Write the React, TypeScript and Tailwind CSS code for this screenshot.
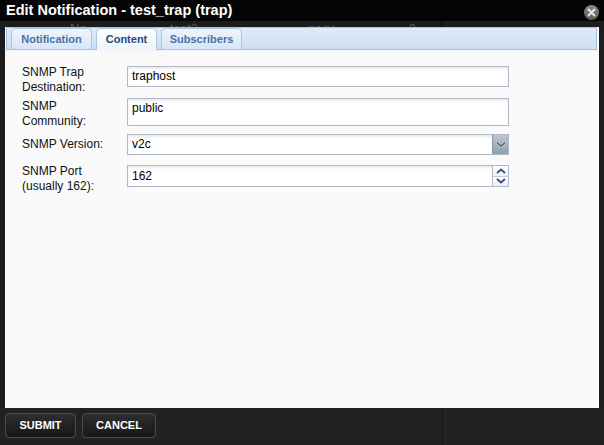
import React from "react";

const font = { fontFamily: '"Liberation Sans", Arial, Helvetica, sans-serif' };

function Row({ label, children, labelClass = "", className = "" }: { label: React.ReactNode; children: React.ReactNode; labelClass?: string; className?: string }) {
  return (
    <div className={`flex items-start ${className}`}>
      <div className={`w-[105px] shrink-0 text-[12px] leading-[15px] text-[#111] ${labelClass}`}>{label}</div>
      {children}
    </div>
  );
}

export default function App() {
  return (
    <div className="w-[604px] h-[445px] bg-[#222] flex flex-col overflow-hidden relative" style={font}>
      {/* title bar */}
      <div className="h-[21px] bg-[#050505] flex items-center pl-[6px] relative">
        <span className="text-white font-bold text-[14.5px] leading-none">Edit Notification - test_trap (trap)</span>
        <div className="absolute left-[584px] top-[5px] w-[15px] h-[15px] rounded-full bg-gradient-to-b from-[#8a8a8a] to-[#5a5a5a] flex items-center justify-center">
          <svg width="9" height="9" viewBox="0 0 9 9">
            <path d="M1.5 1.5 L7.5 7.5 M7.5 1.5 L1.5 7.5" stroke="#e8e8e8" strokeWidth="2" strokeLinecap="round" />
          </svg>
        </div>
      </div>
      {/* background strip: page behind the dialog */}
      <div className="h-[6px] bg-[#1c1c1c] relative overflow-hidden flex items-start text-[13px] leading-[13px] text-[#555]">
        <span className="ml-[70px] mt-[1px]">No</span>
        <span className="ml-[83px] mt-[1px]">test2</span>
        <span className="ml-[110px] mt-[1px]">page</span>
        <span className="ml-[72px] mt-[1px]">0</span>
        <div className="absolute left-[441px] top-0 w-[2px] h-full bg-[#111]" />
      </div>
      {/* main */}
      <div className="flex h-[381px]">
        <div className="w-[5px] bg-[#1c1c1c]" />
        <div className="w-[594px] bg-[#fafafa] flex flex-col">
          {/* tab bar */}
          <div className="ml-[1px] mr-[2px] h-[23px] border border-[#a3c4e8] bg-gradient-to-b from-[#e0eaf6] to-[#cddff1] flex items-end pl-[4px] gap-[4px]">
            <div className="h-[21px] w-[81px] rounded-t-[5px] border border-b-0 border-[#a8c7e6] bg-gradient-to-b from-[#eef4fb] to-[#d8e6f5] flex items-center justify-center text-[11px] font-bold text-[#4a72a6]">Notification</div>
            <div className="h-[22px] -mb-[1px] w-[61px] rounded-t-[5px] border border-b-0 border-[#a8c7e6] bg-gradient-to-b from-[#ffffff] to-[#eef4fb] flex items-center justify-center text-[11px] font-bold text-[#1f4a82]">Content</div>
            <div className="h-[21px] w-[81px] rounded-t-[5px] border border-b-0 border-[#a8c7e6] bg-gradient-to-b from-[#eef4fb] to-[#d8e6f5] flex items-center justify-center text-[11px] font-bold text-[#4a72a6]">Subscribers</div>
          </div>
          <div className="h-[2px] bg-[#f3f6fa]" />
          {/* form */}
          <div className="pl-[17px] pt-[14px] flex flex-col">
            <Row label={<>SNMP Trap<br />Destination:</>} className="h-[32px]" labelClass="-mt-[1px]">
              <div className="w-[382px] h-[21px] border border-[#b3b7c8] bg-white shadow-[inset_0_2px_2px_rgba(0,0,0,0.08)] text-[12px] leading-[19px] pl-[4px] text-black">traphost</div>
            </Row>
            <Row label={<>SNMP<br />Community:</>} className="h-[36px]" labelClass="mt-[1px]">
              <div className="w-[382px] h-[28px] border border-[#b3b7c8] bg-white shadow-[inset_0_2px_2px_rgba(0,0,0,0.08)] text-[12px] leading-[15px] pl-[4px] pt-[2px] text-black">public</div>
            </Row>
            <Row label="SNMP Version:" className="h-[31px]" labelClass="mt-[3px]">
              <div className="w-[382px] h-[21px] border border-[#b3b7c8] bg-white shadow-[inset_0_2px_2px_rgba(0,0,0,0.08)] flex">
                <div className="flex-1 text-[12px] leading-[19px] pl-[4px] text-black">v2c</div>
                <div className="w-[16px] h-full border-l border-[#8797a6] bg-gradient-to-b from-[#bac7d2] to-[#8ea1b2] flex items-center justify-center">
                  <svg width="10" height="7" viewBox="0 0 10 7">
                    <path d="M1 1.5 L5 5 L9 1.5" stroke="#e6ecf1" strokeWidth="2.4" fill="none" />
                    <path d="M1 1.5 L5 5 L9 1.5" stroke="#505860" strokeWidth="1.6" fill="none" />
                  </svg>
                </div>
              </div>
            </Row>
            <Row label={<>SNMP Port<br />(usually 162):</>} labelClass="-mt-[1px]">
              <div className="w-[382px] h-[22px] border border-[#b3b7c8] bg-white shadow-[inset_0_2px_2px_rgba(0,0,0,0.08)] flex">
                <div className="flex-1 text-[12px] leading-[20px] pl-[4px] text-black">162</div>
                <div className="w-[16px] h-full border-l border-[#b3b7c8] flex flex-col">
                  <div className="flex-1 border-b border-[#c6c9d4] bg-gradient-to-b from-[#ffffff] to-[#eef0f4] flex items-center justify-center">
                    <svg width="10" height="6" viewBox="0 0 10 6">
                      <path d="M1 5 L5 1.5 L9 5" stroke="#2c4f8e" strokeWidth="1.8" fill="none" />
                    </svg>
                  </div>
                  <div className="flex-1 bg-gradient-to-b from-[#ffffff] to-[#eef0f4] flex items-center justify-center">
                    <svg width="10" height="6" viewBox="0 0 10 6">
                      <path d="M1 1 L5 4.5 L9 1" stroke="#2c4f8e" strokeWidth="1.8" fill="none" />
                    </svg>
                  </div>
                </div>
              </div>
            </Row>
          </div>
        </div>
        <div className="w-[5px] bg-[#1e1e1e]" />
      </div>
      {/* bottom bar */}
      <div className="flex-1 bg-[#222] relative flex items-start pt-[5px] pl-[5px] gap-[6px]">
        <div className="absolute left-[441px] top-0 w-[2px] h-full bg-[#1c1c1c]" />
        <button className="w-[71px] h-[25px] rounded-[4px] border border-[#4a4a4a] bg-gradient-to-b from-[#2e2e2e] to-[#181818] text-white text-[11px] font-bold">SUBMIT</button>
        <button className="w-[74px] h-[25px] rounded-[4px] border border-[#4a4a4a] bg-gradient-to-b from-[#2e2e2e] to-[#181818] text-white text-[11px] font-bold">CANCEL</button>
      </div>
    </div>
  );
}
